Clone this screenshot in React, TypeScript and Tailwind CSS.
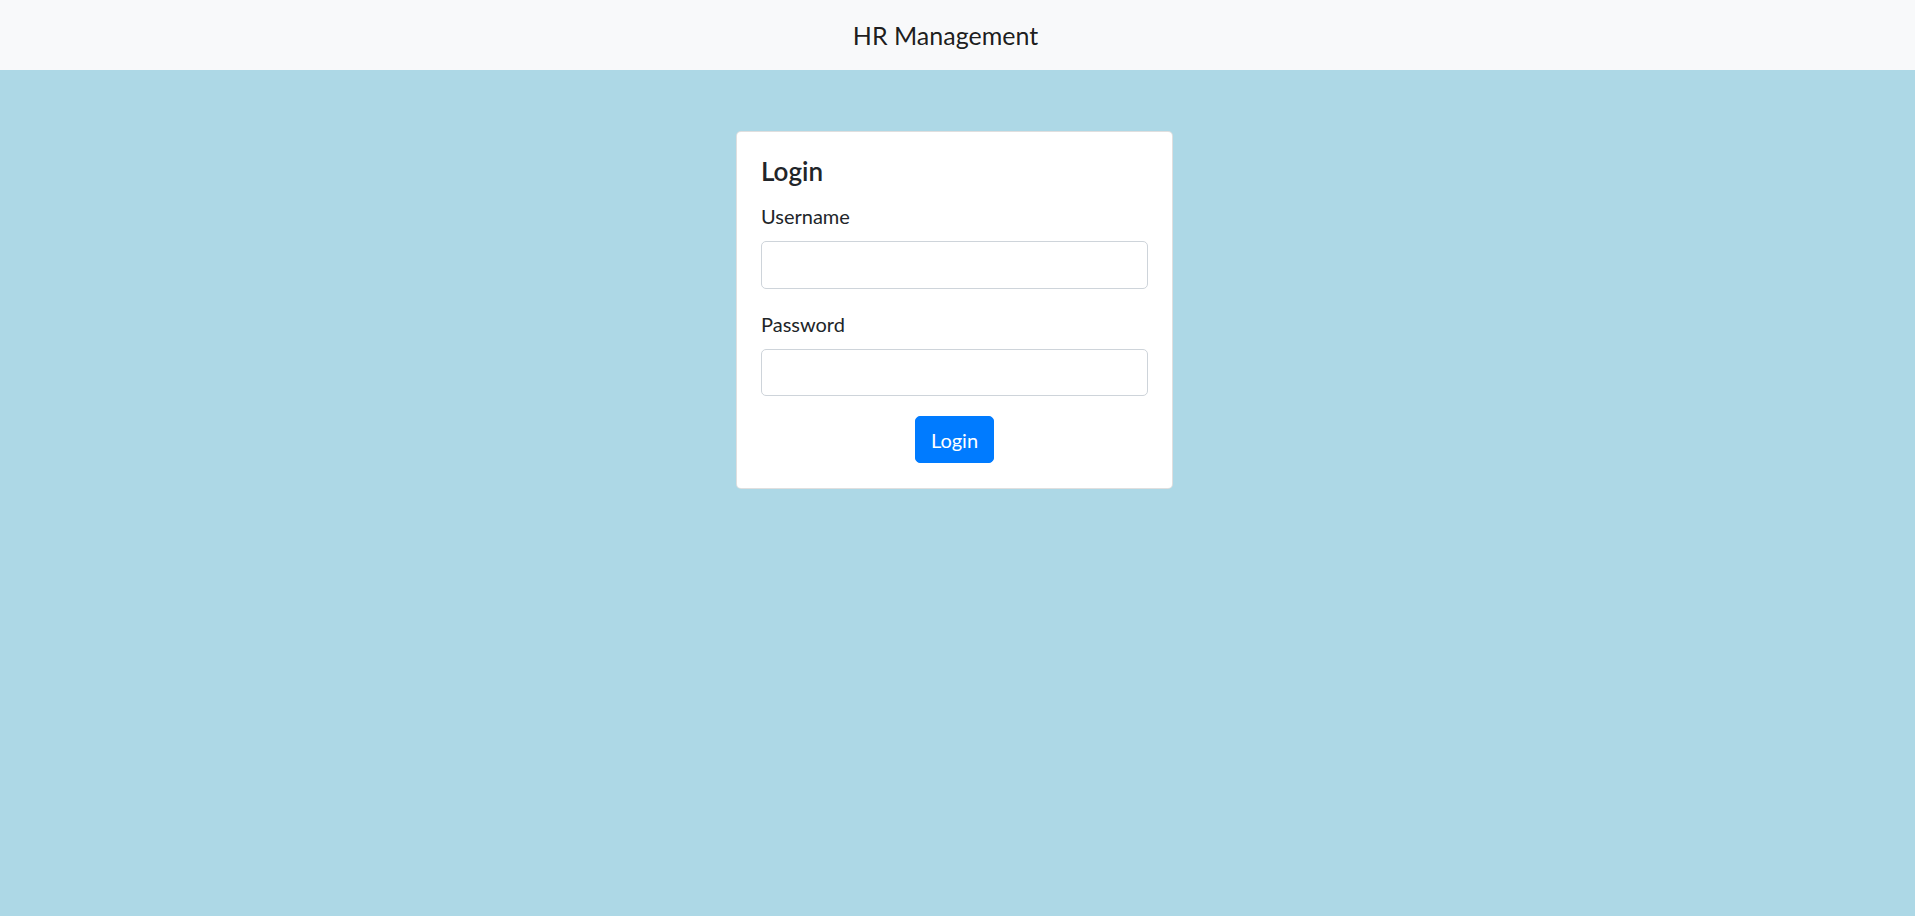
export default function App() {
  return (
    <div className="min-h-[916px] bg-[#add8e6] font-['Lato','Noto_Sans',sans-serif] text-[#212529]">
      <nav className="flex h-[70px] items-center justify-center bg-[#f8f9fa] pr-[24px]">
        <span className="text-[25px] leading-[38px] text-black/90">HR Management</span>
      </nav>

      <div className="flex justify-center pr-[6px] pt-[61px]">
        <div className="w-[437px] rounded-[5px] border border-black/[0.125] bg-white px-[24px] pt-[24px] pb-[25px]">
          <h5 className="mb-[15px] text-[26px] font-semibold leading-[30px]">Login</h5>
          <form onSubmit={(e) => e.preventDefault()}>
            <div className="mb-[20px]">
              <label className="mb-[10px] block text-[20px] leading-[30px]">Username</label>
              <input
                type="text"
                className="block h-[47.5px] w-full rounded-[5px] border border-[#ced4da] bg-white px-[15px] text-[20px] outline-none"
              />
            </div>
            <div className="mb-[20px]">
              <label className="mb-[10px] block text-[20px] leading-[30px]">Password</label>
              <input
                type="password"
                className="block h-[47.5px] w-full rounded-[5px] border border-[#ced4da] bg-white px-[15px] text-[20px] outline-none"
              />
            </div>
            <div className="flex justify-center">
              <button
                type="submit"
                className="h-[47px] rounded-[5px] border border-[#007bff] bg-[#007bff] px-[15px] text-[20px] leading-[30px] text-white"
              >
                Login
              </button>
            </div>
          </form>
        </div>
      </div>
    </div>
  );
}
